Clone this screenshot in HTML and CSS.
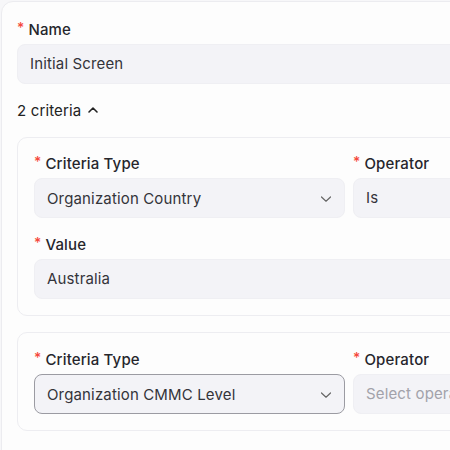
FILE: index.html
```html
<!DOCTYPE html>
<html>
<head>
<meta charset="utf-8">
<link rel="stylesheet" href="styles.css">
</head>
<body>
<div class="page">
  <div class="card">
    <div class="field">
      <label class="label"><span class="req">*</span>Name</label>
      <div class="input">Initial Screen</div>
    </div>
    <div class="toggle">2 criteria
      <svg class="up" width="12" height="12" viewBox="0 0 12 12"><path d="M2 8 L6 4 L10 8" fill="none" stroke="#222" stroke-width="1.6" stroke-linecap="round" stroke-linejoin="round"/></svg>
    </div>
    <div class="crit">
      <div class="grid">
        <div class="field">
          <label class="label"><span class="req">*</span>Criteria Type</label>
          <div class="input select">Organization Country
            <svg class="chev" width="12" height="12" viewBox="0 0 12 12"><path d="M1.5 4 L6 8.2 L10.5 4" fill="none" stroke="#666" stroke-width="1.2" stroke-linecap="round" stroke-linejoin="round"/></svg>
          </div>
        </div>
        <div class="field">
          <label class="label"><span class="req">*</span>Operator</label>
          <div class="input">Is</div>
        </div>
        <div class="field full">
          <label class="label"><span class="req">*</span>Value</label>
          <div class="input">Australia</div>
        </div>
      </div>
    </div>
    <div class="crit">
      <div class="grid">
        <div class="field">
          <label class="label"><span class="req">*</span>Criteria Type</label>
          <div class="input select focus">Organization CMMC Level
            <svg class="chev" width="12" height="12" viewBox="0 0 12 12"><path d="M1.5 4 L6 8.2 L10.5 4" fill="none" stroke="#666" stroke-width="1.2" stroke-linecap="round" stroke-linejoin="round"/></svg>
          </div>
        </div>
        <div class="field">
          <label class="label"><span class="req">*</span>Operator</label>
          <div class="input placeholder">Select operator</div>
        </div>
      </div>
    </div>
  </div>
</div>
</body>
</html>
```

FILE: styles.css
```css
html, body {
  margin: 0;
  padding: 0;
  background: #f7f7f9;
  overflow: hidden;
}
body {
  font-family: Inter, "Noto Sans", sans-serif;
  color: #2a2a30;
  font-size: 15px;
  letter-spacing: 0.15px;
}
.page {
  padding: 1px 0 0 1px;
  width: 700px;
}
.card {
  background: #fdfdfd;
  border: 1px solid #ececf0;
  border-radius: 12px;
  padding: 17px 15px 20px 15px;
  width: 680px;
}
.field {
  display: flex;
  flex-direction: column;
  gap: 5px;
}
.label {
  display: flex;
  align-items: center;
  height: 20px;
  font-weight: 500;
  font-size: 15px;
  color: #26262c;
}
.req {
  color: #f5483b;
  margin-right: 4px;
  font-size: 14px;
  position: relative;
  top: -2px;
}
.input {
  box-sizing: border-box;
  height: 40px;
  background: #f3f3f7;
  border: 1px solid #efeff3;
  border-radius: 8px;
  display: flex;
  align-items: center;
  padding: 0 12px 2px 12px;
  font-size: 15px;
  color: #34343a;
  white-space: nowrap;
  overflow: hidden;
}
.select {
  justify-content: space-between;
  padding-bottom: 0;
}
.select .chev {
  margin-top: 1px;
}
.focus {
  border-color: #9b9ba2;
}
.placeholder {
  color: #a2a2aa;
}
.toggle {
  display: flex;
  align-items: center;
  gap: 6px;
  height: 24px;
  margin-top: 14px;
  margin-bottom: 15px;
  font-size: 15px;
  color: #222;
}
.crit {
  border: 1px solid #ededf1;
  border-radius: 10px;
  background: #fdfdfd;
  padding: 15px 16px 16px 16px;
  margin-bottom: 16px;
}
.crit + .crit {
  padding-top: 16px;
}
.grid {
  display: grid;
  grid-template-columns: 311px 311px;
  column-gap: 8px;
  row-gap: 16px;
}
.full {
  grid-column: 1 / span 2;
}
```
